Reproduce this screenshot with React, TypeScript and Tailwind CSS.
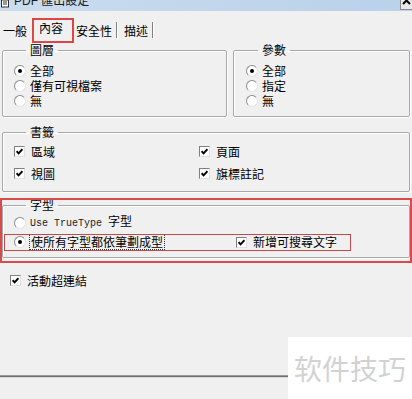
const cjk = { fontFamily: '"Noto Sans CJK TC", "Noto Sans CJK SC", sans-serif' };

function Radio({ on }: { on?: boolean }) {
  return (
    <span className="inline-flex h-[12px] w-[12px] shrink-0 items-center justify-center rounded-full border border-[#8c8c8c] border-r-[#e2e2e2] border-b-[#e2e2e2] bg-white">
      {on && <span className="h-[4px] w-[4px] rounded-full bg-black" />}
    </span>
  );
}

function Check() {
  return (
    <span className="inline-flex h-[11px] w-[11px] shrink-0 items-center justify-center border border-[#808080] border-r-[#e0e0e0] border-b-[#e0e0e0] bg-white">
      <svg width="7" height="7" viewBox="0 0 7 7">
        <path d="M0.6 3.2 L2.6 5.4 L6.4 1.2" stroke="#000" strokeWidth="1.9" fill="none" />
      </svg>
    </span>
  );
}

function Row({ children, className = "" }: { children: React.ReactNode; className?: string }) {
  return <div className={`flex h-[15px] items-center ${className}`}>{children}</div>;
}

function Legend({ children }: { children: React.ReactNode }) {
  return <legend className="ml-[12px] px-[4px] text-[12px] leading-[12px] text-black">{children}</legend>;
}

// etched group box frame
const box = "rounded-[2px] border border-[#a8a8a8] shadow-[inset_1px_1px_0_#fff,1px_1px_0_#fff]";

export default function App() {
  return (
    <div className="relative h-[399px] w-[412px] overflow-hidden bg-[#f0f0f0] text-[12px] leading-[12px] text-black" style={cjk}>
      {/* title bar, cut off at the top */}
      <div className="flex h-[11px] items-start overflow-hidden bg-gradient-to-r from-[#cbdcee] to-[#b9d1ea]">
        <svg width="10" height="8" viewBox="0 0 10 8" className="ml-[1px] shrink-0">
          <rect x="0.5" y="0" width="7" height="7" fill="#fff" stroke="#333" />
          <path d="M2 2 H6 M2 4 H6" stroke="#333" />
        </svg>
        <span className="-mt-[5px] ml-[3px] text-[12px] leading-[13px] text-[#1a1a1a]" style={{ fontFamily: '"Liberation Sans", "Noto Sans CJK TC", sans-serif' }}>
          PDF 匯出設定
        </span>
        <div className="ml-auto flex h-[10px] w-[12px] items-start justify-center overflow-hidden border-b border-l border-[#8a8a8a] bg-[#e8e8e8]">
          <svg width="9" height="9" viewBox="0 0 9 9" className="-mt-[4px]">
            <path d="M1 1 L8 8 M8 1 L1 8" stroke="#000" strokeWidth="2" />
          </svg>
        </div>
      </div>

      {/* tabs */}
      <div className="mt-[7px] flex h-[20px] items-start">
        <span className="ml-[3px] pt-[7px]">一般</span>
        <span className="ml-[12px] pt-[4px]">內容</span>
        <span className="ml-[13px] pt-[7px]">安全性</span>
        <span className="ml-[4px] mt-[4px] h-[16px] w-[2px] border-l border-r border-l-[#808080] border-r-white" />
        <span className="ml-[6px] pt-[7px]">描述</span>
        <span className="ml-[4px] mt-[4px] h-[16px] w-[2px] border-l border-r border-l-[#808080] border-r-white" />
      </div>

      {/* 圖層 / 參數 */}
      <div className="mx-[2px] mt-[6px] flex gap-[6px]">
        <fieldset className={`w-[225px] pb-[8px] pl-[11px] pt-[7px] ${box}`}>
          <Legend>圖層</Legend>
          <Row className="gap-[4px]"><Radio on />全部</Row>
          <Row className="gap-[4px]"><Radio />僅有可視檔案</Row>
          <Row className="gap-[4px]"><Radio />無</Row>
        </fieldset>
        <fieldset className={`w-[177px] pb-[8px] pl-[12px] pt-[7px] ${box}`}>
          <Legend>參數</Legend>
          <Row className="gap-[4px]"><Radio on />全部</Row>
          <Row className="gap-[4px]"><Radio />指定</Row>
          <Row className="gap-[4px]"><Radio />無</Row>
        </fieldset>
      </div>

      {/* 書籤 */}
      <fieldset className={`mx-[2px] mt-[9px] pb-[10px] pl-[11px] pt-[6px] ${box}`}>
        <Legend>書籤</Legend>
        <div className="grid grid-cols-[185px_1fr] gap-y-[7px]">
          <Row className="gap-[6px]"><Check />區域</Row>
          <Row className="gap-[6px]"><Check />頁面</Row>
          <Row className="gap-[6px]"><Check />視圖</Row>
          <Row className="gap-[6px]"><Check />旗標註記</Row>
        </div>
      </fieldset>

      {/* 字型 */}
      <fieldset className={`mx-[2px] mt-[7px] pb-[7px] pl-[11px] pt-[4px] ${box}`}>
        <Legend>字型</Legend>
        <Row className="gap-[4px]">
          <Radio />
          <span>
            <span className="text-[10px] text-[#222]" style={{ fontFamily: '"Liberation Mono", monospace' }}>Use TrueType </span>
            字型
          </span>
        </Row>
        <div className="mt-[4px] grid h-[16px] grid-cols-[222px_1fr] items-center">
          <div className="flex items-center gap-[3px]">
            <Radio on />
            <span className="border border-dotted border-[#333] px-[1px] py-[1px]">使所有字型都依筆劃成型</span>
          </div>
          <div className="flex items-center gap-[6px]"><Check />新增可搜尋文字</div>
        </div>
      </fieldset>

      <Row className="ml-[10px] mt-[15px] gap-[6px]"><Check />活動超連結</Row>

      {/* bottom separator */}
      <div className="mt-[87px] h-[3px] border-b border-t border-b-[#d8d8d8] border-t-[#9a9a9a] bg-[#6f6f6f]" />

      {/* red annotation marks */}
      <div className="absolute left-[32px] top-[18px] h-[25px] w-[42px] border-2 border-[#dc4646]" />
      <div className="absolute left-0 top-[198px] h-[65px] w-[412px] border-[2px] border-[#d94a4a]" />
      <div className="absolute left-[4px] top-[234px] h-[17px] w-[347px] border border-[#c44a4a]" />

      {/* watermark */}
      <div className="absolute bottom-0 right-0 flex h-[62px] w-[124px] items-center justify-center bg-white">
        <span className="text-[28px] leading-[30px] text-[#d2d2d2]" style={{ fontFamily: '"Noto Sans CJK SC", sans-serif' }}>软件技巧</span>
      </div>
    </div>
  );
}
